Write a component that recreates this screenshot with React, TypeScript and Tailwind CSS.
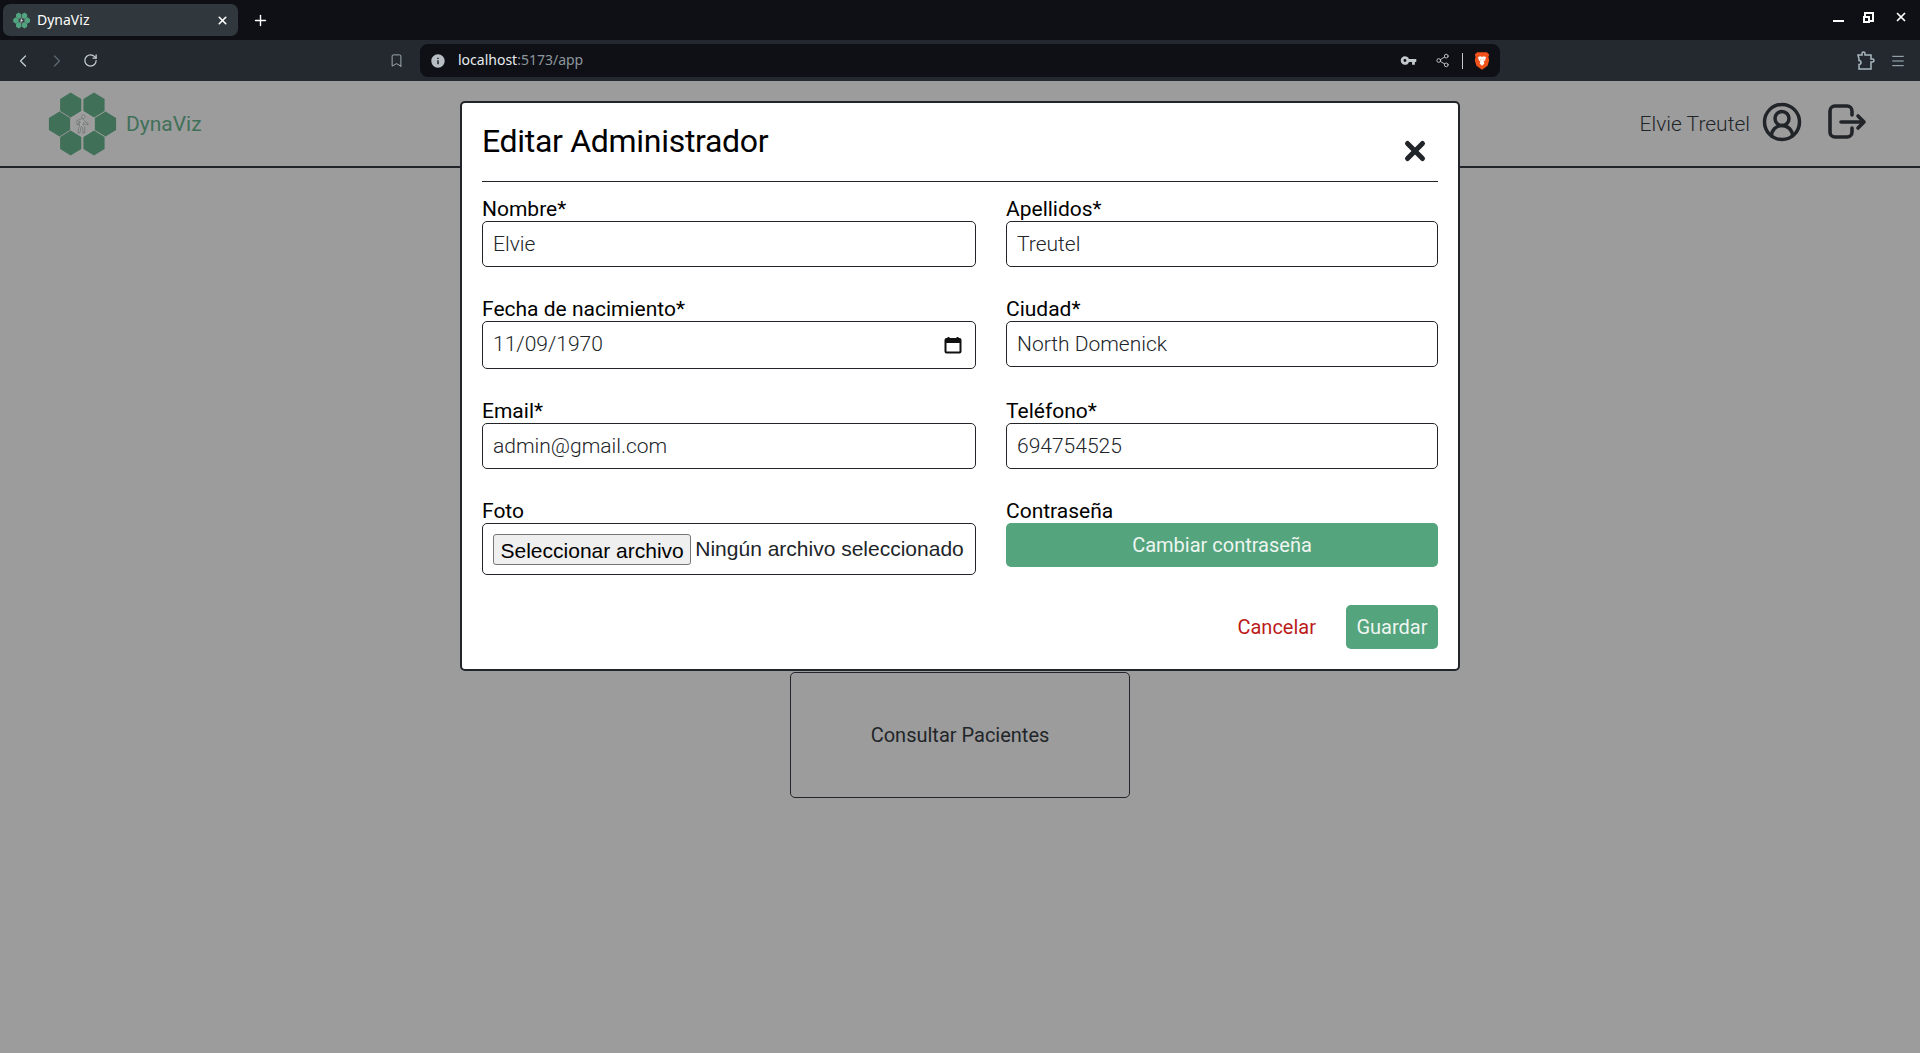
import { Bookmark, ChevronLeft, ChevronRight, CircleUserRound, Menu, Plus, RotateCw, Share2, X } from 'lucide-react';
import { MdInfo, MdVpnKey } from 'react-icons/md';

const WALK =
  'M13.5 5.5c1.1 0 2-.9 2-2s-.9-2-2-2-2 .9-2 2 .9 2 2 2zM9.8 8.9L7 23h2.1l1.8-8 2.1 2v6h2v-7.5l-2.1-2 .6-3C14.8 12 16.8 13 19 13v-2c-1.9 0-3.5-1-4.3-2.4l-1-1.6c-.4-.6-1-1-1.7-1-.3 0-.5.1-.8.1L6 8.3V13h2V9.6l1.8-.7';

const HEX = '0,-12.6 10.6,-6 10.6,6 0,12.6 -10.6,6 -10.6,-6';

function Logo({ className, color }: { className: string; color: string }) {
  const cells = [
    [22.7, 15],
    [46, 15],
    [11.5, 34],
    [57.5, 34],
    [22.7, 53],
    [46, 53],
  ];
  return (
    <svg viewBox="0 0 72 68" className={className}>
      {cells.map(([x, y]) => (
        <polygon key={`${x}-${y}`} points={HEX} transform={`translate(${x} ${y})`} fill={color} />
      ))}
      <polygon points={HEX} transform="translate(34.5 34)" fill="none" stroke="#ffffff" strokeWidth="0.6" />
      <g transform="translate(24 23.7) scale(0.84)">
        <path d={WALK} fill="#ffffff" stroke="#66786e" strokeWidth="0.5" />
      </g>
    </svg>
  );
}

function BraveIcon() {
  return (
    <svg viewBox="0 0 20 24" className="w-[16px] h-[20px]">
      <path d="M4 1h12l3 3-1 3 1 4-2 7-7 5-7-5-2-7 1-4-1-3z" fill="#f1511b" />
      <path d="M5 7l3-1 2 1 2-1 3 1-1 4-2 2 1 2-3 3-3-3 1-2-2-2z" fill="#fff" />
      <path d="M8 10h1v1H8zM11 10h1v1h-1z" fill="#f1511b" />
    </svg>
  );
}

function ExtensionIcon() {
  return (
    <svg viewBox="0 0 20 20" className="w-[20px] h-[20px]" fill="none" stroke="#a9b8bf" strokeWidth="1.5">
      <path d="M3 4h4V2.5a1.5 1.5 0 0 1 3 0V4h6v4h1.5a1.5 1.5 0 0 1 0 3H16v7H4v-4.5a2 2 0 0 0 0-4V8z" />
    </svg>
  );
}

function LogoutIcon() {
  return (
    <svg viewBox="0 0 60 55" className="w-[60px] h-[55px] ml-[17px]" fill="none" stroke="#343a40" strokeWidth="3.6" strokeLinecap="round" strokeLinejoin="round">
      <path d="M32 19v-4a5 5 0 0 0-5-5H15a5 5 0 0 0-5 5v21a5 5 0 0 0 5 5h12a5 5 0 0 0 5-5v-4" />
      <path d="M21 26h23M38 20l6 6-6 6" />
    </svg>
  );
}

function BrowserChrome() {
  return (
    <div className="font-['Noto_Sans',sans-serif]">
      <div className="h-[40px] bg-[#0e1016] flex items-start pt-[4px] pl-[3px]">
        <div className="w-[235px] h-[32px] bg-[#30373d] rounded-[7px] flex items-center pl-[10px] pr-[9px] text-white text-[14px]">
          <Logo className="w-[18px] h-[17px] mr-[6px]" color="#52a37f" />
          <span className="mb-[2px]">DynaViz</span>
          <X size={13} strokeWidth={3} className="ml-auto text-white" />
        </div>
        <Plus size={17} strokeWidth={2} className="text-white ml-[14px] mt-[8px]" />
        <div className="ml-auto flex items-center gap-[20px] pr-[12px] mt-[6px] text-white">
          <div className="w-[11px] h-[2px] bg-white mt-[8px]" />
          <div className="relative w-[10px] h-[10px] border-2 border-white">
            <div className="absolute -left-[3px] top-[2px] w-[7px] h-[7px] bg-[#0e1016] border-2 border-white" />
          </div>
          <X size={14} strokeWidth={3} />
        </div>
      </div>
      <div className="h-[41px] bg-[#23292e] flex items-center relative">
        <ChevronLeft size={20} strokeWidth={1.5} className="text-[#c5ced3] ml-[13px]" />
        <ChevronRight size={20} strokeWidth={1.5} className="text-[#5f686e] ml-[14px]" />
        <RotateCw size={15} strokeWidth={2} className="text-[#c5ced3] ml-[16px]" />
        <Bookmark size={15} strokeWidth={1.5} className="text-[#a9b2b7] ml-[291px]" />
        <div className="ml-[16px] w-[1080px] h-[33px] bg-[#0e1016] rounded-[8px] flex items-center pl-[10px] pr-[10px] text-[14px]">
          <MdInfo size={16} className="text-[#b7bfc4]" />
          <span className="ml-[12px] mb-[2px] text-[#e8ebed]">localhost</span>
          <span className="mb-[2px] text-[#8d969c]">:5173/app</span>
          <div className="ml-auto flex items-center">
            <MdVpnKey size={17} className="text-[#c2c8cc] mr-[2px]" />
            <Share2 size={15} strokeWidth={1.5} className="text-[#c2c8cc] ml-[16px]" />
            <div className="w-px h-[16px] bg-[#c2c8cc] ml-[12px] mr-[11px]" />
            <BraveIcon />
          </div>
        </div>
        <div className="ml-auto flex items-center gap-[15px] pr-[14px]">
          <ExtensionIcon />
          <Menu size={16} strokeWidth={1.5} className="text-[#a9b8bf]" />
        </div>
      </div>
    </div>
  );
}

function Field({ label, value }: { label: string; value: string }) {
  return (
    <div>
      <label className="block text-[21px] leading-[28px] text-black h-[26px]">{label}</label>
      <input
        readOnly
        value={value}
        className="w-full h-[46px] border border-[#212529] rounded-[5px] px-[10px] text-[21px] font-light text-[#212529] bg-white outline-none"
      />
    </div>
  );
}

function DateField() {
  return (
    <div>
      <label className="block text-[21px] leading-[28px] text-black h-[26px]">Fecha de nacimiento*</label>
      <div className="h-[48px] border border-[#212529] rounded-[5px] pl-[10px] pr-[13px] flex items-center justify-between">
        <span className="text-[21px] font-light text-[#212529]">11/09/1970</span>
        <svg viewBox="0 0 18 18" className="w-[18px] h-[18px]" fill="none">
          <path d="M4.5 1v3M13.5 1v3" stroke="#111" strokeWidth="2" />
          <rect x="1.5" y="3" width="15" height="13.5" rx="1" stroke="#111" strokeWidth="2" />
          <rect x="1.5" y="3" width="15" height="4" fill="#111" />
        </svg>
      </div>
    </div>
  );
}

function EditModal() {
  return (
    <div className="absolute inset-0 bg-[#00000059]">
      <div className="mt-[20px] ml-[460px] w-[1000px] h-[570px] bg-white border-2 border-[#212529] rounded-[5px] px-[20px] text-black">
        <div className="h-[79px] border-b border-[#212529] flex justify-between">
          <h2 className="text-[32px] leading-[38px] mt-[19px] font-normal tracking-[-0.3px]">Editar Administrador</h2>
          <X size={30} strokeWidth={4} className="text-[#212529] mt-[33px] mr-[8px]" />
        </div>
        <div className="grid grid-cols-[494px_432px] gap-x-[30px] mt-[13px]">
          <Field label="Nombre*" value="Elvie" />
          <Field label="Apellidos*" value="Treutel" />
          <div className="mt-[28px]">
            <DateField />
          </div>
          <div className="mt-[28px]">
            <Field label="Ciudad*" value="North Domenick" />
          </div>
          <div className="mt-[28px]">
            <Field label="Email*" value="admin@gmail.com" />
          </div>
          <div className="mt-[28px]">
            <Field label="Teléfono*" value="694754525" />
          </div>
          <div className="mt-[28px]">
            <label className="block text-[21px] leading-[28px] h-[26px]">Foto</label>
            <div className="h-[52px] border border-[#212529] rounded-[5px] px-[10px] flex items-center font-['Liberation_Sans',sans-serif] text-[21px] text-[#212529] whitespace-nowrap">
              <button className="h-[31px] px-[6.5px] pb-[4px] bg-[#efefef] border border-[#767676] rounded-[3px] text-black">
                Seleccionar archivo
              </button>
              <span className="ml-[4px]">Ningún archivo seleccionado</span>
            </div>
          </div>
          <div className="mt-[28px]">
            <label className="block text-[21px] leading-[28px] h-[26px]">Contraseña</label>
            <button className="w-full h-[44px] bg-[#54a47d] rounded-[5px] text-[#eef5f1] text-[20px]">Cambiar contraseña</button>
          </div>
        </div>
        <div className="flex justify-end items-center mt-[30px]">
          <button className="text-[#bb1a1a] text-[20px] mr-[30px]">Cancelar</button>
          <button className="w-[92px] h-[44px] bg-[#54a47d] rounded-[5px] text-[#eef5f1] text-[20px]">Guardar</button>
        </div>
      </div>
    </div>
  );
}

export default function App() {
  return (
    <div className="h-screen flex flex-col overflow-hidden font-['Roboto',sans-serif]">
      <BrowserChrome />
      <div className="relative flex-1 bg-[#f0f0f1]">
        <header className="h-[87px] border-b-2 border-[#343a40] flex items-center pl-[48px] pr-[40px]">
          <Logo className="w-[72px] h-[68px]" color="#64ad89" />
          <span className="ml-[6px] mt-[2px] text-[21px] text-[#64ad89]">DynaViz</span>
          <span className="ml-auto mt-[2px] text-[21px] font-light text-[#343a40]">Elvie Treutel</span>
          <CircleUserRound preserveAspectRatio="none" strokeWidth={2} className="w-[42px] h-[42px] ml-[11px] mb-[4px] text-[#343a40]" />
          <LogoutIcon />
        </header>
        <div className="flex justify-center mt-[504px]">
          <div className="w-[340px] h-[126px] border border-[#343a40] rounded-[5px] flex items-center justify-center text-[20px] text-[#343a40]">
            Consultar Pacientes
          </div>
        </div>
        <EditModal />
      </div>
    </div>
  );
}
